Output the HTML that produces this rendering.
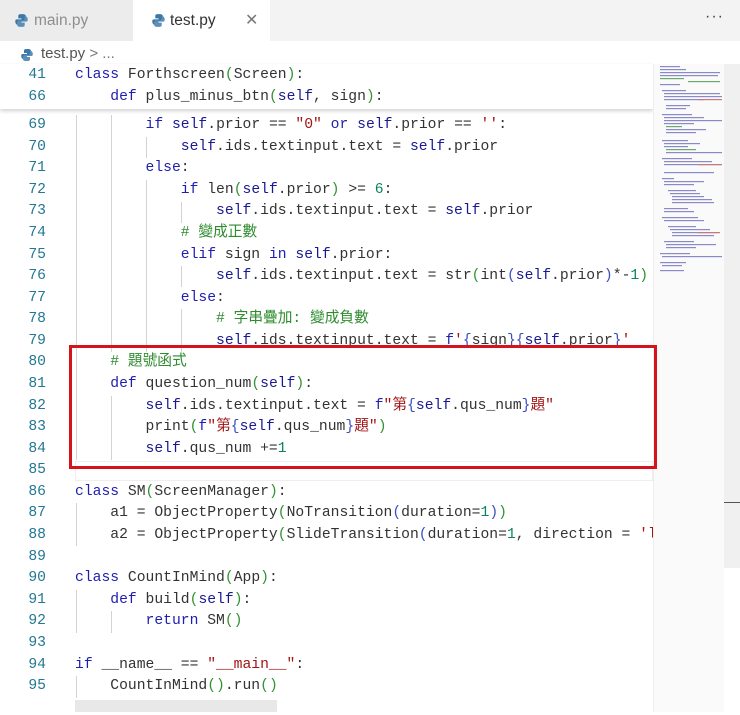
<!DOCTYPE html>
<html><head><meta charset="utf-8">
<style>
*{margin:0;padding:0;box-sizing:border-box}
body{width:740px;height:712px;background:#fff;position:relative;overflow:hidden;font-family:"Liberation Sans","Noto Sans CJK TC",sans-serif}
.tabbar{position:absolute;left:0;top:0;width:740px;height:41px;background:#f3f3f3}
.tab{position:absolute;top:0;height:41px;font-size:15.5px;line-height:42px}
.ln{position:absolute;left:0;width:46px;text-align:right;color:#237893;font-family:"Liberation Mono",monospace;font-size:14.7px}
.cd{position:absolute;left:75px;white-space:pre;color:#333;font-family:"Liberation Mono","Noto Sans CJK TC",monospace;font-size:14.7px}
.row{position:absolute;left:0;width:653px;height:21.6px;line-height:21.6px;overflow:hidden}
.k{color:#1f1faf}.s{color:#1a1a90}.st{color:#a31515}.cm{color:#2e8b2e}.n{color:#098658}.p{color:#3b4fbf}.g{color:#319331}
.gd{position:absolute;width:1px;background:#d3d3d3}
</style></head><body>
<div class="tabbar">
 <div class="tab" style="left:0;width:133px;background:#ececec;color:#8e8e8e;padding-left:34px">main.py</div>
 <div class="tab" style="left:133px;width:137px;background:#fff;color:#333;padding-left:37px">test.py<span style="position:absolute;left:112px;color:#777;font-size:16px">✕</span></div>
 <div style="position:absolute;left:705px;top:8px;color:#444;font-size:16px;letter-spacing:1px">···</div>
 <svg style="position:absolute;left:14px;top:13px" width="15" height="15" viewBox="0 0 14 14"><path d="M7 1C4 1 4 2 4 3v2h3v1H2.5C1 6 1 8 1.5 9.5 2 11 3 11 4 11V9c0-1 1-2 2-2h3c1 0 2-1 2-2V3C11 1 9 1 7 1z" fill="#3b78a8"/><path d="M7 13c3 0 3-1 3-2V9H7V8h4.5C13 8 13 6 12.5 4.5 12 3 11 3 10 3v2c0 1-1 2-2 2H5c-1 0-2 1-2 2v2c0 2 2 2 4 2z" fill="#5b8fb8"/></svg>
 <svg style="position:absolute;left:151px;top:13px" width="15" height="15" viewBox="0 0 14 14"><path d="M7 1C4 1 4 2 4 3v2h3v1H2.5C1 6 1 8 1.5 9.5 2 11 3 11 4 11V9c0-1 1-2 2-2h3c1 0 2-1 2-2V3C11 1 9 1 7 1z" fill="#3b78a8"/><path d="M7 13c3 0 3-1 3-2V9H7V8h4.5C13 8 13 6 12.5 4.5 12 3 11 3 10 3v2c0 1-1 2-2 2H5c-1 0-2 1-2 2v2c0 2 2 2 4 2z" fill="#5b8fb8"/></svg>
</div>
<svg style="position:absolute;left:20px;top:48px" width="14" height="14" viewBox="0 0 14 14"><path d="M7 1C4 1 4 2 4 3v2h3v1H2.5C1 6 1 8 1.5 9.5 2 11 3 11 4 11V9c0-1 1-2 2-2h3c1 0 2-1 2-2V3C11 1 9 1 7 1z" fill="#3b78a8"/><path d="M7 13c3 0 3-1 3-2V9H7V8h4.5C13 8 13 6 12.5 4.5 12 3 11 3 10 3v2c0 1-1 2-2 2H5c-1 0-2 1-2 2v2c0 2 2 2 4 2z" fill="#5b8fb8"/></svg>
<div style="position:absolute;left:41px;top:45px;font-size:15px;color:#555">test.py <span style="color:#777">&gt; ...</span></div>

<div style="position:absolute;left:0;top:3px;width:740px;height:712px">
<div class="gd" style="left:76px;top:112px;height:345px"></div>
<div class="gd" style="left:111px;top:112px;height:237px"></div>
<div class="gd" style="left:146px;top:134px;height:21px"></div>
<div class="gd" style="left:146px;top:177px;height:172px"></div>
<div class="gd" style="left:181px;top:199px;height:21px"></div>
<div class="gd" style="left:181px;top:263px;height:21px"></div>
<div class="gd" style="left:181px;top:306px;height:43px"></div>
<div class="gd" style="left:111px;top:393px;height:64px"></div>
<div class="gd" style="left:76px;top:500px;height:43px"></div>
<div class="gd" style="left:76px;top:587px;height:43px"></div>
<div class="gd" style="left:111px;top:608px;height:22px"></div>
<div class="gd" style="left:76px;top:673px;height:22px"></div>

<div class="row" style="top:112px"><span class="ln">69</span><span class="cd">        <span class="k">if</span> <span class="s">self</span>.prior == <span class="st">"0"</span> <span class="k">or</span> <span class="s">self</span>.prior == <span class="st">''</span>:</span></div>
<div class="row" style="top:133.6px"><span class="ln">70</span><span class="cd">            <span class="s">self</span>.ids.textinput.text = <span class="s">self</span>.prior</span></div>
<div class="row" style="top:155.2px"><span class="ln">71</span><span class="cd">        <span class="k">else</span>:</span></div>
<div class="row" style="top:176.7px"><span class="ln">72</span><span class="cd">            <span class="k">if</span> len<span class="g">(</span><span class="s">self</span>.prior<span class="g">)</span> &gt;= <span class="n">6</span>:</span></div>
<div class="row" style="top:198.3px"><span class="ln">73</span><span class="cd">                <span class="s">self</span>.ids.textinput.text = <span class="s">self</span>.prior</span></div>
<div class="row" style="top:219.9px"><span class="ln">74</span><span class="cd">            <span class="cm"># 變成正數</span></span></div>
<div class="row" style="top:241.5px"><span class="ln">75</span><span class="cd">            <span class="k">elif</span> sign <span class="k">in</span> <span class="s">self</span>.prior:</span></div>
<div class="row" style="top:263.1px"><span class="ln">76</span><span class="cd">                <span class="s">self</span>.ids.textinput.text = str<span class="g">(</span>int<span class="p">(</span><span class="s">self</span>.prior<span class="p">)</span>*-<span class="n">1</span><span class="g">)</span></span></div>
<div class="row" style="top:284.6px"><span class="ln">77</span><span class="cd">            <span class="k">else</span>:</span></div>
<div class="row" style="top:306.2px"><span class="ln">78</span><span class="cd">                <span class="cm"># 字串疊加: 變成負數</span></span></div>
<div class="row" style="top:327.8px"><span class="ln">79</span><span class="cd">                <span class="s">self</span>.ids.textinput.text = <span class="k">f</span><span class="st">'</span><span class="p">{</span>sign<span class="p">}{</span><span class="s">self</span>.prior<span class="p">}</span><span class="st">'</span></span></div>
<div class="row" style="top:349.4px"><span class="ln">80</span><span class="cd">    <span class="cm"># 題號函式</span></span></div>
<div class="row" style="top:371px"><span class="ln">81</span><span class="cd">    <span class="k">def</span> question_num<span class="g">(</span><span class="s">self</span><span class="g">)</span>:</span></div>
<div class="row" style="top:392.5px"><span class="ln">82</span><span class="cd">        <span class="s">self</span>.ids.textinput.text = <span class="k">f</span><span class="st">"第</span><span class="p">{</span><span class="s">self</span>.qus_num<span class="p">}</span><span class="st">題"</span></span></div>
<div class="row" style="top:414.1px"><span class="ln">83</span><span class="cd">        print<span class="g">(</span><span class="k">f</span><span class="st">"第</span><span class="p">{</span><span class="s">self</span>.qus_num<span class="p">}</span><span class="st">題"</span><span class="g">)</span></span></div>
<div class="row" style="top:435.7px"><span class="ln">84</span><span class="cd">        <span class="s">self</span>.qus_num +=<span class="n">1</span></span></div>
<div class="row" style="top:457.3px"><span class="ln">85</span></div>
<div class="row" style="top:478.9px"><span class="ln">86</span><span class="cd"><span class="k">class</span> SM<span class="g">(</span>ScreenManager<span class="g">)</span>:</span></div>
<div class="row" style="top:500.4px"><span class="ln">87</span><span class="cd">    a1 = ObjectProperty<span class="g">(</span>NoTransition<span class="p">(</span>duration=<span class="n">1</span><span class="p">)</span><span class="g">)</span></span></div>
<div class="row" style="top:522px"><span class="ln">88</span><span class="cd">    a2 = ObjectProperty<span class="g">(</span>SlideTransition<span class="p">(</span>duration=<span class="n">1</span>, direction = <span class="st">'left'</span><span class="p">)</span><span class="g">)</span></span></div>
<div class="row" style="top:543.6px"><span class="ln">89</span></div>
<div class="row" style="top:565.2px"><span class="ln">90</span><span class="cd"><span class="k">class</span> CountInMind<span class="g">(</span>App<span class="g">)</span>:</span></div>
<div class="row" style="top:586.8px"><span class="ln">91</span><span class="cd">    <span class="k">def</span> build<span class="g">(</span><span class="s">self</span><span class="g">)</span>:</span></div>
<div class="row" style="top:608.3px"><span class="ln">92</span><span class="cd">        <span class="k">return</span> SM<span class="g">()</span></span></div>
<div class="row" style="top:629.9px"><span class="ln">93</span></div>
<div class="row" style="top:651.5px"><span class="ln">94</span><span class="cd"><span class="k">if</span> __name__ == <span class="st">"__main__"</span>:</span></div>
<div class="row" style="top:673.1px"><span class="ln">95</span><span class="cd">    CountInMind<span class="g">()</span>.run<span class="g">()</span></span></div>
<div style="position:absolute;left:75px;top:458px;width:578px;height:20px;border:1px solid #eee"></div>
</div>

<!-- sticky header -->
<div style="position:absolute;left:0;top:64px;width:653px;height:45px;background:#fff;box-shadow:0 2px 4px rgba(0,0,0,0.18)">
 <div class="row" style="top:0;height:22px;line-height:23px"><span class="ln">41</span><span class="cd"><span class="k">class</span> Forthscreen<span class="g">(</span>Screen<span class="g">)</span>:</span></div>
 <div class="row" style="top:22px;height:22px;line-height:23px"><span class="ln">66</span><span class="cd">    <span class="k">def</span> plus_minus_btn<span class="g">(</span><span class="s">self</span>, sign<span class="g">)</span>:</span></div>
</div>

<!-- minimap -->
<div style="position:absolute;left:653px;top:64px;width:71px;height:648px;background:#fafafa;border-left:1px solid #eee"></div>
<svg style="position:absolute;left:658px;top:64px" width="64" height="210" viewBox="0 0 64 210">
<g fill="#8a8ac8">
<rect x="2" y="2" width="20" height="1.2"/><rect x="2" y="5" width="26" height="1.2"/><rect x="2" y="8" width="60" height="1.2"/><rect x="2" y="11" width="58" height="1.2"/>
<rect x="2" y="20" width="20" height="1.2"/><rect x="4" y="26" width="24" height="1.2"/><rect x="6" y="29" width="56" height="1.2"/><rect x="6" y="32" width="58" height="1.2"/><rect x="6" y="35" width="40" height="1.2"/>
<rect x="8" y="41" width="24" height="1.2"/><rect x="8" y="44" width="20" height="1.2"/>
<rect x="4" y="50" width="30" height="1.2"/><rect x="6" y="53" width="40" height="1.2"/><rect x="6" y="56" width="58" height="1.2"/><rect x="6" y="59" width="30" height="1.2"/>
<rect x="8" y="65" width="40" height="1.2"/><rect x="8" y="68" width="30" height="1.2"/>
<rect x="4" y="76" width="26" height="1.2"/><rect x="6" y="79" width="36" height="1.2"/><rect x="6" y="82" width="24" height="1.2"/>
<rect x="8" y="88" width="56" height="1.2"/><rect x="4" y="94" width="30" height="1.2"/><rect x="6" y="97" width="48" height="1.2"/><rect x="6" y="100" width="58" height="1.2"/>
<rect x="6" y="108" width="50" height="1.2"/><rect x="4" y="114" width="12" height="1.2"/><rect x="6" y="117" width="40" height="1.2"/><rect x="6" y="120" width="30" height="1.2"/>
<rect x="10" y="126" width="28" height="1.2"/><rect x="12" y="129" width="30" height="1.2"/><rect x="14" y="132" width="32" height="1.2"/><rect x="14" y="135" width="40" height="1.2"/><rect x="14" y="138" width="42" height="1.2"/>
<rect x="6" y="144" width="24" height="1.2"/><rect x="6" y="147" width="30" height="1.2"/><rect x="4" y="153" width="36" height="1.2"/><rect x="6" y="156" width="40" height="1.2"/>
<rect x="10" y="162" width="28" height="1.2"/><rect x="12" y="165" width="40" height="1.2"/><rect x="14" y="168" width="46" height="1.2"/><rect x="14" y="171" width="42" height="1.2"/>
<rect x="6" y="177" width="30" height="1.2"/><rect x="8" y="180" width="50" height="1.2"/><rect x="8" y="183" width="30" height="1.2"/><rect x="2" y="189" width="30" height="1.2"/><rect x="4" y="192" width="60" height="1.2"/>
<rect x="2" y="198" width="26" height="1.2"/><rect x="4" y="201" width="20" height="1.2"/><rect x="2" y="206" width="24" height="1.2"/>
</g>
<g fill="#6aaa6a"><rect x="2" y="14" width="24" height="1.2"/><rect x="30" y="17" width="32" height="1.2"/><rect x="8" y="62" width="16" height="1.2"/><rect x="8" y="85" width="30" height="1.2"/></g>
<g fill="#c87a7a"><rect x="40" y="35" width="24" height="1.2"/><rect x="40" y="100" width="24" height="1.2"/><rect x="40" y="168" width="22" height="1.2"/></g>
</svg>
<div style="position:absolute;left:724px;top:64px;width:16px;height:504px;background:#f0f0f0"></div>
<div style="position:absolute;left:724px;top:502px;width:16px;height:1px;background:#555"></div>

<!-- red box (on top) -->
<div style="position:absolute;left:69px;top:345px;width:588px;height:124px;border:3px solid #d6121b"></div>

<!-- h scrollbar -->
<div style="position:absolute;left:75px;top:700px;width:202px;height:12px;background:#e8e8e8"></div>
</body></html>
